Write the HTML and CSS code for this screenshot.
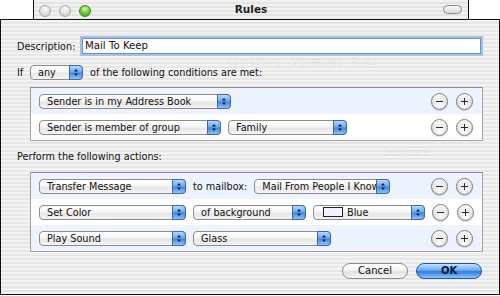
FILE: index.html
```html
<!DOCTYPE html>
<html lang="en">
<head>
  <meta charset="UTF-8">
  <title>Rules</title>
  <link rel="stylesheet" href="styles.css">
</head>
<body>
  <div class="titlebar">
    <div class="lights">
      <span class="light"></span>
      <span class="light"></span>
      <span class="light green"></span>
    </div>
    <div class="title">Rules</div>
    <span class="toolbar-pill"></span>
  </div>

  <div class="sheet">
    <!-- bits of the window behind, showing through the sheet -->
    <span class="ghost ghost-tabs">Composing&nbsp;&nbsp;&nbsp;Signatures&nbsp;&nbsp;&nbsp;Rules</span>
    <span class="ghost ghost-dup">Duplicate</span>

    <div class="desc-row">
      <span class="desc-label">Description:</span>
      <div class="field">Mail To Keep</div>
    </div>

    <div class="if-row">
      <span class="if-label">If</span>
      <div class="popup pop-any"><span class="pop-text">any</span><span class="arrows"></span></div>
      <span class="if-text">of the following conditions are met:</span>
    </div>

    <div class="box">
      <div class="row alt">
        <div class="popup pop-cond1"><span class="pop-text">Sender is in my Address Book</span><span class="arrows"></span></div>
        <div class="pm"><span class="circle minus"></span><span class="circle plus"></span></div>
      </div>
      <div class="row">
        <div class="popup pop-cond2"><span class="pop-text">Sender is member of group</span><span class="arrows"></span></div>
        <div class="popup pop-family"><span class="pop-text">Family</span><span class="arrows"></span></div>
        <div class="pm"><span class="circle minus"></span><span class="circle plus"></span></div>
      </div>
    </div>

    <div class="section-label">Perform the following actions:</div>

    <div class="box">
      <div class="row alt">
        <div class="popup pop-action"><span class="pop-text">Transfer Message</span><span class="arrows"></span></div>
        <span class="row-text">to mailbox:</span>
        <div class="popup pop-mailbox"><span class="pop-text">Mail From People I Know</span><span class="arrows"></span></div>
        <div class="pm"><span class="circle minus"></span><span class="circle plus"></span></div>
      </div>
      <div class="row">
        <div class="popup pop-action"><span class="pop-text">Set Color</span><span class="arrows"></span></div>
        <div class="popup pop-bg"><span class="pop-text">of background</span><span class="arrows"></span></div>
        <div class="popup pop-color"><span class="swatch"></span><span class="pop-text">Blue</span><span class="arrows"></span></div>
        <div class="pm"><span class="circle minus"></span><span class="circle plus"></span></div>
      </div>
      <div class="row alt">
        <div class="popup pop-action"><span class="pop-text">Play Sound</span><span class="arrows"></span></div>
        <div class="popup pop-sound"><span class="pop-text">Glass</span><span class="arrows"></span></div>
        <div class="pm"><span class="circle minus"></span><span class="circle plus"></span></div>
      </div>
    </div>

    <div class="button-row">
      <span class="btn btn-cancel">Cancel</span>
      <span class="btn btn-ok">OK</span>
    </div>
  </div>
</body>
</html>
```

FILE: styles.css
```css
body {
  margin: 0;
  background: #fff;
  font-family: 'DejaVu Sans', 'Liberation Sans', sans-serif;
  font-size: 9.7px;
  color: #111;
  width: 500px;
  height: 296px;
  overflow: hidden;
}

/* back window title bar */
.titlebar {
  margin-left: 33px;
  width: 436px;
  height: 19px;
  box-sizing: border-box;
  border-left: 1px solid #111;
  border-right: 1px solid #111;
  background: repeating-linear-gradient(to bottom, #f1f1f1 0 2px, #e4e4e4 2px 4px);
  display: flex;
  align-items: center;
  position: relative;
}

.lights {
  display: flex;
  gap: 8px;
  padding-left: 5px;
  padding-top: 2px;
}

.light {
  width: 12px;
  height: 12px;
  box-sizing: border-box;
  border-radius: 50%;
  border: 1px solid #a9a9a9;
  background: radial-gradient(circle at 50% 30%, #fbfbfb 0, #dcdcdc 60%, #c8c8c8 100%);
}

.light.green {
  border-color: #3f8a1c;
  background: radial-gradient(circle at 50% 30%, #d9f7b8 0, #79cf3b 45%, #3d9a12 100%);
}

.title {
  position: absolute;
  left: 0;
  right: 0;
  top: 3px;
  text-align: center;
  font-weight: bold;
  font-size: 10.5px;
  color: #222;
}

.toolbar-pill {
  position: absolute;
  right: 6px;
  top: 5px;
  width: 19px;
  height: 9px;
  box-sizing: border-box;
  border: 1px solid #8c8c8c;
  border-radius: 5px;
  background: linear-gradient(#fafafa, #d6d6d6);
}

/* the sheet */
.sheet {
  position: relative;
  width: 500px;
  height: 276px;
  box-sizing: border-box;
  border: 1px solid #111;
  padding: 16px 16px 0 16px;
  background: repeating-linear-gradient(to bottom, #f3f3f3 0 2px, #e6e6e6 2px 4px);
}

.ghost {
  position: absolute;
  color: rgba(0, 0, 0, 0.07);
  white-space: nowrap;
}

.ghost-tabs { left: 226px; top: 36px; }
.ghost-dup { left: 382px; top: 127px; }

.desc-row {
  display: flex;
  align-items: center;
  height: 20px;
  position: relative;
}

.desc-label {
  width: 65px;
}

.field {
  flex: 1;
  height: 16px;
  margin-right: 2px;
  box-sizing: border-box;
  border: 1px solid #6f8fc4;
  box-shadow: 0 0 0 2px #a7c2e6;
  background: #fff;
  padding-left: 2px;
  line-height: 14px;
  font-size: 10.2px;
}

.if-row {
  display: flex;
  align-items: center;
  height: 16px;
  margin-top: 8px;
}

.if-label { width: 13px; }
.if-text { margin-left: 7px; }

.section-label {
  height: 14px;
  line-height: 14px;
  margin-top: 9px;
}

/* rule boxes */
.box {
  margin-top: 7px;
  margin-left: 13px;
  border: 1px solid #a3a3a3;
  border-top-color: #8f8f8f;
  background: #fff;
}

.section-label + .box { margin-top: 8px; }

.row {
  height: 26px;
  display: flex;
  align-items: center;
  gap: 7px;
  padding: 0 9px 0 8px;
}

.row.alt { background: #edf3fe; }

/* popup menus */
.popup {
  height: 15px;
  box-sizing: border-box;
  border: 1px solid #8b8b8b;
  border-radius: 4px;
  background: linear-gradient(#ffffff, #f6f6f6 45%, #e6e6e6 55%, #f4f4f4);
  display: flex;
  align-items: center;
  padding-left: 7px;
  flex-shrink: 0;
}

.pop-text {
  flex: 1;
  white-space: nowrap;
  overflow: hidden;
  line-height: 13px;
}

.arrows {
  width: 12px;
  align-self: stretch;
  margin: -1px -1px -1px 0;
  border: 1px solid #3e69a8;
  border-radius: 0 4px 4px 0;
  background:
    url("data:image/svg+xml;utf8,<svg xmlns='http://www.w3.org/2000/svg' width='12' height='13'><path d='M4 5.5 L6 3 L8 5.5 Z M4 7.5 L6 10 L8 7.5 Z' fill='%23102040'/></svg>") center / 12px 13px no-repeat,
    linear-gradient(#b9d7fa, #6ea8ee 45%, #3f88e3 55%, #8ec3f7);
}

.pop-any { width: 53px; }
.pop-cond1 { width: 192px; }
.pop-cond2 { width: 182px; }
.pop-family { width: 119px; }
.pop-action { width: 147px; }
.pop-mailbox { width: 136px; }
.pop-bg { width: 113px; }
.pop-color { width: 112px; padding-left: 9px; }
.pop-sound { width: 138px; }

.swatch {
  width: 20px;
  height: 10px;
  box-sizing: border-box;
  border: 1px solid #222;
  background: #f2f2ff;
  margin-right: 4px;
}

/* minus / plus */
.pm {
  margin-left: auto;
  display: flex;
  gap: 8px;
}

.circle {
  width: 17px;
  height: 17px;
  box-sizing: border-box;
  border-radius: 50%;
  border: 1px solid #7c7c7c;
  background:
    radial-gradient(circle at 50% 75%, #ffffff 0, rgba(255, 255, 255, 0) 60%),
    linear-gradient(#fdfdfd, #e0e0e0 55%, #cfcfcf);
  box-shadow: 0 1px 1px rgba(0, 0, 0, 0.15);
  position: relative;
}

.circle::before,
.plus::after {
  content: "";
  position: absolute;
  left: 4px;
  top: 7px;
  width: 7px;
  height: 1.6px;
  background: #2a2a2a;
}

.plus::after {
  left: 6.7px;
  top: 4.3px;
  width: 1.6px;
  height: 7px;
}

/* push buttons */
.button-row {
  display: flex;
  justify-content: flex-end;
  gap: 8px;
  margin-top: 11px;
  padding-right: 1px;
}

.btn {
  width: 66px;
  height: 16px;
  box-sizing: border-box;
  border-radius: 8px;
  text-align: center;
  line-height: 14px;
  font-size: 10px;
}

.btn-cancel {
  border: 1px solid #8c8c8c;
  background: linear-gradient(#ffffff, #f4f4f4 45%, #e1e1e1 55%, #f6f6f6);
}

.btn-ok {
  border: 1px solid #2b569c;
  background: linear-gradient(#c6e0fc, #6aa9ef 45%, #2f7ce0 55%, #8ac6fa);
  color: #0c1a33;
  font-weight: bold;
}
```
